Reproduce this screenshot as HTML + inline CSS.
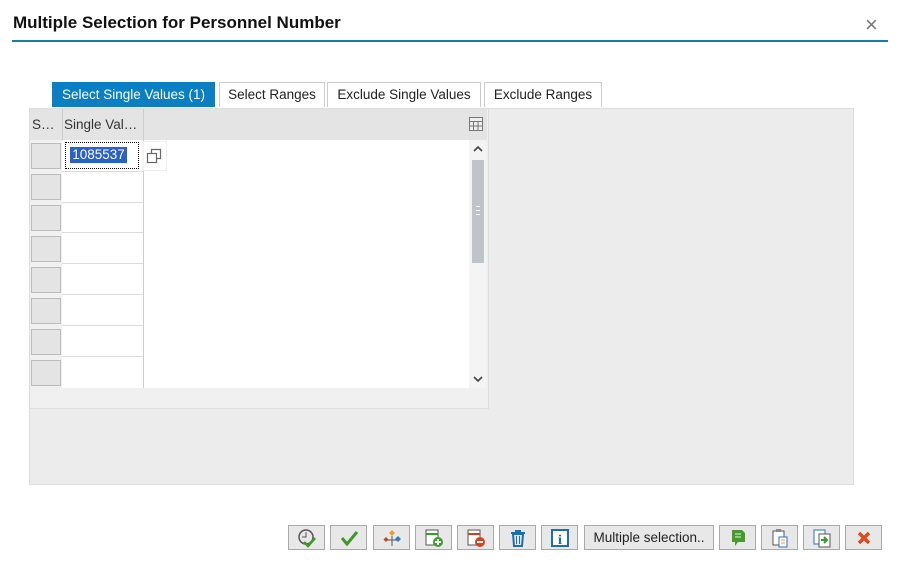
<html><head><style>
body{margin:0;width:900px;height:567px;background:#fff;font-family:"Liberation Sans",sans-serif;position:relative;overflow:hidden}
.a{position:absolute}
.tab{position:absolute;top:82px;height:25px;border:1px solid #ccc;border-bottom:none;font-size:13.5px;line-height:24px;text-align:center;color:#222;background:#fff;box-sizing:border-box}
.btn{position:absolute;top:525px;height:25px;width:37px;border:1px solid #aaa;background:#e8e8e8;box-sizing:border-box;display:flex;align-items:center;justify-content:center;font-size:13.5px;color:#222}
.rs{position:absolute;left:31px;width:30px;height:26px;background:#e4e4e4;border:1px solid #bbb;box-sizing:border-box}
.hl{position:absolute;left:62px;width:81px;height:1px;background:#ddd}
</style></head><body>
<div class="a" style="left:13px;top:13px;font-size:17px;font-weight:bold;color:#111">Multiple Selection for Personnel Number</div>
<div class="a" style="left:865px;top:12px;font-size:22px;color:#777">×</div>
<div class="a" style="left:12px;top:40px;width:876px;height:2px;background:#1a7f9e"></div>
<div class="tab" style="left:52px;width:163px;background:#0a7fc2;color:#fff;border-color:#0a7fc2">Select Single Values (1)</div>
<div class="tab" style="left:219px;width:106px">Select Ranges</div>
<div class="tab" style="left:327px;width:154px">Exclude Single Values</div>
<div class="tab" style="left:484px;width:118px">Exclude Ranges</div>
<div class="a" style="left:29px;top:108px;width:825px;height:377px;background:#ececec;border:1px solid #ddd;box-sizing:border-box"></div>
<div class="a" style="left:30px;top:109px;width:458px;height:299px;background:#f0f0f0;border-right:1px solid #ddd;border-bottom:1px solid #ddd"></div>
<div class="a" style="left:30px;top:109px;width:457px;height:31px;background:#e4e4e4"></div>
<div class="a" style="left:32px;top:117px;font-size:13.5px;color:#333">S…</div>
<div class="a" style="left:62px;top:109px;width:1px;height:31px;background:#ccc"></div>
<div class="a" style="left:64px;top:117px;font-size:13.5px;color:#333">Single Val…</div>
<div class="a" style="left:143px;top:109px;width:1px;height:279px;background:#ccc"></div>
<div class="a" style="left:469px;top:117px"><svg width="14" height="14"><rect x="0.5" y="0.5" width="13" height="13" fill="#eee" stroke="#777"/><path d="M0 4.5h14M0 9h14M4.5 4v10M9 4v10" stroke="#777"/></svg></div>
<div class="a" style="left:62px;top:140px;width:407px;height:248px;background:#fff"></div>
<div class="a" style="left:143px;top:140px;width:1px;height:248px;background:#ccc"></div>
<div class="a" style="left:469px;top:140px;width:17px;height:248px;background:#f4f4f4"></div>
<div class="a" style="left:472px;top:160px;width:12px;height:103px;background:#c0c4c8"></div>
<div class="a" style="left:476px;top:206px;width:4px;height:9px;border-top:1px solid #fff;border-bottom:1px solid #fff;box-sizing:border-box;background:linear-gradient(transparent 3px,#fff 3px,#fff 4px,transparent 4px)"></div>
<svg class="a" style="left:472px;top:145px" width="12" height="8"><path d="M2 6l4-4 4 4" stroke="#444" stroke-width="1.6" fill="none"/></svg>
<svg class="a" style="left:472px;top:375px" width="12" height="8"><path d="M2 2l4 4 4-4" stroke="#444" stroke-width="1.6" fill="none"/></svg>
<div class="rs" style="top:143px"></div><div class="rs" style="top:174px"></div><div class="rs" style="top:205px"></div><div class="rs" style="top:236px"></div><div class="rs" style="top:267px"></div><div class="rs" style="top:298px"></div><div class="rs" style="top:329px"></div><div class="rs" style="top:360px"></div>
<div class="hl" style="top:171px"></div><div class="hl" style="top:202px"></div><div class="hl" style="top:232px"></div><div class="hl" style="top:263px"></div><div class="hl" style="top:294px"></div><div class="hl" style="top:325px"></div><div class="hl" style="top:356px"></div>
<div class="a" style="left:65px;top:142px;width:74px;height:27px;border:1px dotted #000;background:#fff;box-sizing:border-box"></div>
<div class="a" style="left:70px;top:147px;width:57px;height:16px;background:#2a61c9;color:#fff;font-size:13.5px;line-height:16px;text-align:center">1085537</div>
<div class="a" style="left:143px;top:141px;width:24px;height:30px;background:#fff;border:1px solid #eee;box-sizing:border-box"></div>
<svg class="a" style="left:145px;top:147px" width="18" height="18"><rect x="2.5" y="6.5" width="9" height="9" fill="none" stroke="#666" stroke-width="1.2"/><path d="M6.5 6V2.5h9v9H12" fill="none" stroke="#666" stroke-width="1.2"/></svg>
<div class="btn" style="left:288px"><svg width="20" height="20"><circle cx="9" cy="9" r="7" fill="none" stroke="#555" stroke-width="1.5"/><path d="M9 4v5h-4" stroke="#555" fill="none"/><path d="M7 14l4 4 7-8" stroke="#3a9a2a" stroke-width="2.5" fill="none"/></svg></div>
<div class="btn" style="left:330px"><svg width="20" height="20"><path d="M3 10l5 6 10-12" stroke="#3a9a2a" stroke-width="3" fill="none"/></svg></div>
<div class="btn" style="left:373px"><svg width="22" height="20"><path d="M11 2l3 3-3 3-3-3z" fill="#e8a020"/><path d="M17 8l3 3-3 3-3-3z" fill="#2a80c8"/><path d="M5 9l2.5 2.5-2.5 2.5-2.5-2.5z" fill="#d04020"/><path d="M11 8v10M11 12l-5 0M11 12l5 0" stroke="#555"/></svg></div>
<div class="btn" style="left:415px"><svg width="20" height="20"><rect x="2" y="2" width="12" height="15" fill="#fff" stroke="#555"/><path d="M2 6h12" stroke="#3a9a2a" stroke-width="2"/><circle cx="14" cy="14" r="5" fill="#3aa02a"/><path d="M11 14h6M14 11v6" stroke="#fff" stroke-width="2"/></svg></div>
<div class="btn" style="left:457px"><svg width="20" height="20"><rect x="2" y="2" width="12" height="15" fill="#fff" stroke="#555"/><path d="M2 6h12" stroke="#d04020" stroke-width="2"/><circle cx="14" cy="14" r="5" fill="#d84020"/><path d="M11 14h6" stroke="#fff" stroke-width="2"/></svg></div>
<div class="btn" style="left:499px"><svg width="20" height="20"><path d="M3 5h14M8 5V3h4v2" stroke="#1a6fb0" stroke-width="2" fill="none"/><path d="M5 6h10l-1 12H6z" fill="none" stroke="#1a6fb0" stroke-width="2"/><path d="M8.5 8v8M11.5 8v8" stroke="#1a6fb0"/></svg></div>
<div class="btn" style="left:541px"><svg width="20" height="20"><rect x="2" y="2" width="16" height="16" fill="#fff" stroke="#1a6fb0" stroke-width="2"/><text x="10" y="16" font-family="Liberation Serif" font-weight="bold" font-size="14" fill="#1a6fb0" text-anchor="middle">i</text></svg></div>
<div class="btn" style="left:584px;width:130px">Multiple selection..</div>
<div class="btn" style="left:719px"><svg width="20" height="20"><path d="M4 2h10l3 3v9h-7l-3 4v-4H4z" fill="#4a9a2a"/><path d="M7 6h6M7 9h6" stroke="#cfe" /></svg></div>
<div class="btn" style="left:761px"><svg width="20" height="20"><rect x="3" y="3" width="11" height="14" fill="#fff" stroke="#555"/><rect x="6" y="1" width="5" height="3" fill="#888"/><rect x="9" y="9" width="8" height="10" fill="#fff" stroke="#2a70c0"/><path d="M11 12h4M11 15h4" stroke="#e8a020"/></svg></div>
<div class="btn" style="left:803px"><svg width="20" height="20"><rect x="2" y="2" width="11" height="14" fill="#fff" stroke="#2a70c0"/><rect x="7" y="6" width="11" height="13" fill="#fff" stroke="#555"/><path d="M9 12h5M12 9l3 3-3 3" stroke="#3a9a2a" stroke-width="2" fill="none"/></svg></div>
<div class="btn" style="left:845px"><svg width="20" height="20"><path d="M5 5l10 10M15 5L5 15" stroke="#e04a1a" stroke-width="3.5"/></svg></div>
</body></html>
